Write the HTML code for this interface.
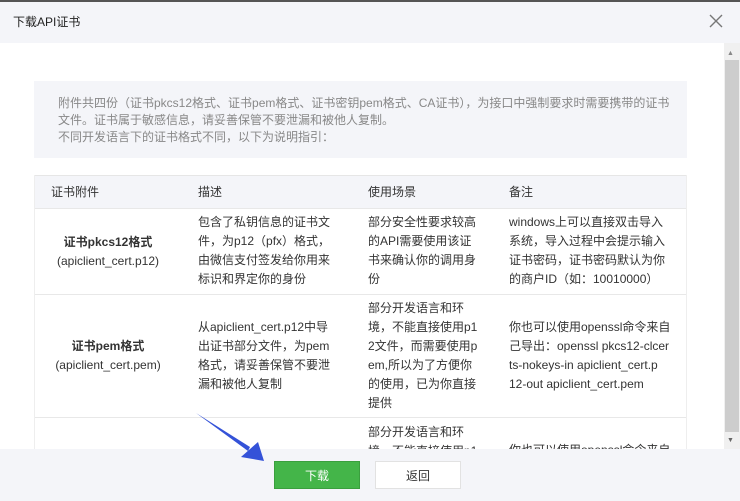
<!DOCTYPE html>
<html><head><meta charset="utf-8"><style>
*{margin:0;padding:0;box-sizing:border-box}
body{width:740px;height:501px;overflow:hidden;background:#fff;font-family:"Liberation Sans","Noto Sans CJK SC",sans-serif;color:#333;position:relative}
.abs{position:absolute}
.hdr{left:0;top:0;width:740px;height:43px;background:#f4f5f9;border-top:2px solid #555}
.title{left:13px;top:13px;font-size:12px;color:#222}
.info{left:34px;top:81px;width:653px;height:77px;background:#f4f5f9;padding:14px 24px;font-size:12px;letter-spacing:0;line-height:17px;color:#888;white-space:nowrap}
.th{left:34px;top:175px;width:653px;height:33px;background:#f4f5f9;border-top:1px solid #e6e6e6}
.cell{font-size:12px;line-height:19px;color:#333}
.line{left:34px;width:653px;height:1px;background:#e8e8e8}
.vl{top:175px;width:1px;height:280px;background:#eee}
.ftr{left:0;top:449px;width:740px;height:52px;background:#f4f5f9}
.btn{top:461px;width:86px;height:28px;font-size:12px;text-align:center;line-height:28px}
.sb{left:724px;top:43px;width:16px;height:406px;background:#f0f0f0}
.thumb{left:725px;top:60px;width:14px;height:372px;background:#cdcdcd}
</style></head><body>
<div class="abs hdr"></div>
<div class="abs title">下载API证书</div>
<svg class="abs" style="left:709px;top:14px" width="14" height="14"><path d="M1 1L13 13M13 1L1 13" stroke="#777" stroke-width="1.4"/></svg>
<div class="abs info">附件共四份（证书pkcs12格式、证书pem格式、证书密钥pem格式、CA证书），为接口中强制要求时需要携带的证书<br>文件。证书属于敏感信息，请妥善保管不要泄漏和被他人复制。<br>不同开发语言下的证书格式不同，以下为说明指引：</div>
<div class="abs th"></div>
<div class="abs cell" style="left:51px;top:183px">证书附件</div>
<div class="abs cell" style="left:198px;top:183px">描述</div>
<div class="abs cell" style="left:368px;top:183px">使用场景</div>
<div class="abs cell" style="left:509px;top:183px">备注</div>
<div class="abs line" style="top:208px"></div>
<div class="abs line" style="top:294px"></div>
<div class="abs line" style="top:417px"></div>
<div class="abs vl" style="left:34px"></div>
<div class="abs vl" style="left:686px"></div>

<div class="abs cell" style="left:34px;top:233px;width:148px;text-align:center"><b>证书pkcs12格式</b><br>(apiclient_cert.p12)</div>
<div class="abs cell" style="left:198px;top:213px">包含了私钥信息的证书文<br>件，为p12（pfx）格式，<br>由微信支付签发给你用来<br>标识和界定你的身份</div>
<div class="abs cell" style="left:368px;top:213px">部分安全性要求较高<br>的API需要使用该证<br>书来确认你的调用身<br>份</div>
<div class="abs cell" style="left:509px;top:213px">windows上可以直接双击导入<br>系统，导入过程中会提示输入<br>证书密码，证书密码默认为你<br>的商户ID（如：10010000）</div>

<div class="abs cell" style="left:34px;top:337px;width:148px;text-align:center"><b>证书pem格式</b><br>(apiclient_cert.pem)</div>
<div class="abs cell" style="left:198px;top:318px">从apiclient_cert.p12中导<br>出证书部分文件，为pem<br>格式，请妥善保管不要泄<br>漏和被他人复制</div>
<div class="abs cell" style="left:368px;top:299px">部分开发语言和环<br>境，不能直接使用p1<br>2文件，而需要使用p<br>em,所以为了方便你<br>的使用，已为你直接<br>提供</div>
<div class="abs cell" style="left:509px;top:318px">你也可以使用openssl命令来自<br>己导出：openssl pkcs12-clcer<br>ts-nokeys-in apiclient_cert.p<br>12-out apiclient_cert.pem</div>

<div class="abs cell" style="left:368px;top:423px">部分开发语言和环<br>境，不能直接使用p1</div>
<div class="abs cell" style="left:509px;top:441px">你也可以使用openssl命令来自</div>

<div class="abs sb"></div>
<div class="abs thumb"></div>
<div class="abs" style="left:727px;top:50px;font-size:7px;color:#888">▲</div>
<div class="abs" style="left:727px;top:437px;font-size:7px;color:#666">▼</div>

<div class="abs ftr"></div>
<div class="abs btn" style="left:274px;background:#44b549;color:#fff;border:1px solid #3a9f3e">下载</div>
<div class="abs btn" style="left:375px;background:#fff;color:#333;border:1px solid #e2e2e2">返回</div>

<svg class="abs" style="left:0;top:0" width="740" height="501">
<polygon points="196,413 250,447 248,451" fill="#3452d8"/>
<polygon points="264,461 241,457 258,442" fill="#3452d8"/>
</svg>
</body></html>
